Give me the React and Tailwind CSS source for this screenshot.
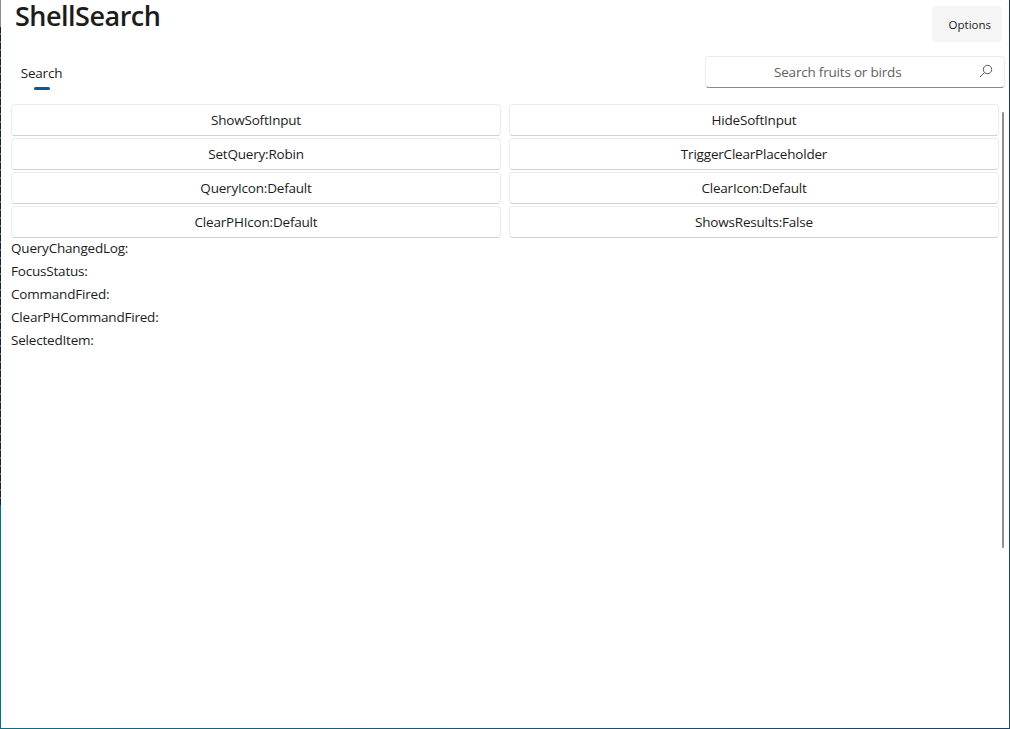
const buttons = [
  ["ShowSoftInput", "HideSoftInput"],
  ["SetQuery:Robin", "TriggerClearPlaceholder"],
  ["QueryIcon:Default", "ClearIcon:Default"],
  ["ClearPHIcon:Default", "ShowsResults:False"],
];
const logs = ["QueryChangedLog:", "FocusStatus:", "CommandFired:", "ClearPHCommandFired:", "SelectedItem:"];

function Btn({ children }) {
  return (
    <button className="h-[32px] rounded-[4px] border border-[#ececec] border-b-[#d0d0d0] bg-white text-[13.5px] tracking-[-0.2px] leading-[20px] text-[#1c1c1c]">
      {children}
    </button>
  );
}

export default function App() {
  return (
    <div className="w-[1010px] h-[729px] bg-white flex font-['Open_Sans','Noto_Sans',sans-serif] text-[#1c1c1c] overflow-hidden">
      <div className="w-[1px] h-full flex flex-col shrink-0">
        <div className="h-[27px] bg-[#8c8c8c]" />
        <div className="h-[478px] bg-[repeating-linear-gradient(180deg,#1f2328_0px,#1f2328_6px,#4a6f8a_6px,#4a6f8a_8px)]" />
        <div className="flex-1 bg-[#0f6a85]" />
      </div>
      <div className="flex-1 flex flex-col min-w-0">
        <div className="flex-1 flex flex-col min-h-0 relative">
          <div className="flex justify-between h-[46px]">
            <div className="pl-[14px] text-[27px] tracking-[-0.5px] leading-[32px] font-semibold whitespace-nowrap">ShellSearch</div>
            <button className="mt-[6px] mr-[7px] w-[70px] h-[36px] pt-[2px] rounded-[4px] bg-[#f5f5f5] text-[11.5px] text-right pr-[11px]">Options</button>
          </div>
          <div className="flex justify-between h-[50px]">
            <div className="ml-[20px] mt-[17px] flex flex-col items-center w-[41px]">
              <span className="text-[13.5px] tracking-[-0.2px] leading-[20px]">Search</span>
              <span className="mt-[4px] w-[16px] h-[3px] rounded-full bg-[#005a9e]" />
            </div>
            <div className="mt-[10px] mr-[4px] w-[300px] h-[32px] rounded-[4px] border border-[#ececec] border-b-[#8a8a8a] flex items-center relative">
              <span className="flex-1 text-left pl-[68px] text-[13.5px] tracking-[-0.2px] text-[#5f5f5f]">Search fruits or birds</span>
              <svg className="absolute right-[11px] top-[7px]" width="14" height="14" viewBox="0 0 14 14" fill="none" stroke="#5a5a5a" strokeWidth="1">
                <circle cx="8.5" cy="5.5" r="4.2" />
                <path d="M5.4 8.6 L1 13" />
              </svg>
            </div>
          </div>
          <div className="pl-[10px] pr-[10px] pt-[8px]">
            <div className="grid grid-cols-2 gap-x-[8px] gap-y-[2px]">
              {buttons.flat().map((b) => <Btn key={b}>{b}</Btn>)}
            </div>
            <div className="flex flex-col -mt-[1px]">
              {logs.map((l) => <div key={l} className="text-[13.5px] tracking-[-0.2px] leading-[23px]">{l}</div>)}
            </div>
          </div>
          <div className="absolute right-[5px] top-[112px] h-[436px] w-[2px] rounded-full bg-[#8f8f8f]" />
        </div>
        <div className="h-[1px] bg-gradient-to-r from-[#0f6a85] to-[#1c3f6b] shrink-0" />
      </div>
      <div className="w-[1px] h-full bg-gradient-to-b from-[#1a2f5e] to-[#1c4a70] shrink-0" />
    </div>
  );
}
